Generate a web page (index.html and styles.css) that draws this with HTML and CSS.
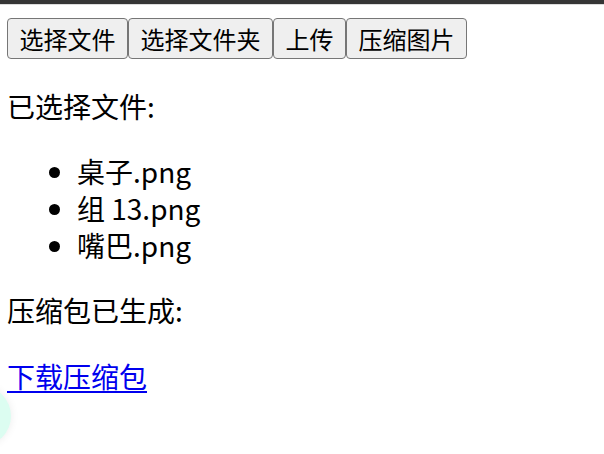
FILE: index.html
```html
<!DOCTYPE html>
<html lang="zh-CN">
<head>
<meta charset="utf-8">
<title>上传</title>
<link rel="stylesheet" href="styles.css">
</head>
<body>
<div class="topbar"></div>
<main class="page">
  <div class="toolbar"><button class="btn">选择文件</button><button class="btn">选择文件夹</button><button class="btn">上传</button><button class="btn">压缩图片</button></div>
  <p class="text">已选择文件:</p>
  <ul class="files">
    <li>桌子.png</li>
    <li>组 13.png</li>
    <li>嘴巴.png</li>
  </ul>
  <p class="text">压缩包已生成:</p>
  <p class="text"><a class="link" href="#">下载压缩包</a></p>
</main>
<div class="float-ball"></div>
</body>
</html>
```
FILE: styles.css
```css
html, body {
  margin: 0;
  padding: 0;
  background: #ffffff;
  overflow: hidden;
}
body {
  font-family: "Noto Sans CJK SC", "Noto Sans", sans-serif;
  color: #000;
  font-size: 28px;
  line-height: 37px;
}
.topbar {
  height: 4px;
  background: #353535;
  border-bottom: 1px solid #dcdcdc;
}
.page {
  padding: 13px 7px 0 7px;
}
.toolbar {
  display: flex;
  height: 41px;
}
.btn {
  font-family: "Noto Sans CJK SC", sans-serif;
  font-size: 24px;
  line-height: 30px;
  height: 41px;
  padding: 0 11.5px;
  margin: 0;
  border: 1px solid #767676;
  border-radius: 4px;
  background: #efefef;
  color: #000;
}
.text {
  margin: 29px 0 0 0;
}
.files {
  margin: 28px 0 0 0;
  padding-left: 70px;
}
.files + .text {
  margin-top: 28px;
}
.link {
  color: #0000ee;
  text-decoration: underline;
  text-underline-offset: 3px;
}
.float-ball {
  position: fixed;
  left: -49px;
  top: 386px;
  width: 60px;
  height: 60px;
  border-radius: 50%;
  background: #dcfdf1;
  box-shadow: 0 0 8px rgba(0, 0, 0, 0.08);
}
```
